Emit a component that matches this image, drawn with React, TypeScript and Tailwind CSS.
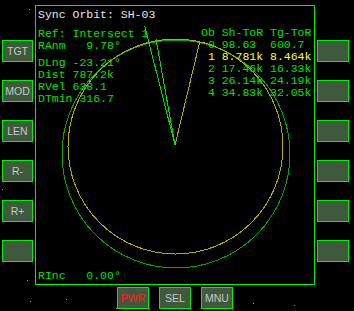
const leftButtons = ['TGT', 'MOD', 'LEN', 'R-', 'R+', ''];
const rightButtons = ['', '', '', '', '', ''];

const stars = [
  [29, 9], [2, 189], [27, 280], [66, 299], [30, 301], [253, 303], [294, 305], [116, 308],
];

const tableRows = [
  { text: ' 0 98.63  600.7', hl: false },
  { text: ' 1 8.781k 8.464k', hl: true },
  { text: ' 2 17.46k 16.33k', hl: false },
  { text: ' 3 26.14k 24.19k', hl: false },
  { text: ' 4 34.83k 32.05k', hl: false },
];

function MfdButton({ label, red, wide }: { label: string; red?: boolean; wide?: boolean }) {
  return (
    <div
      className={`${wide ? 'w-[32px]' : 'w-[31px]'} h-[22px] bg-[#3e593e] border border-[#00f000] flex items-center justify-center text-[10.5px] leading-none font-['Liberation_Sans',Arial,sans-serif] ${
        red ? 'text-[#ff1a1a]' : 'text-[#c8c8c8]'
      }`}
    >
      {label}
    </div>
  );
}

function OrbitPlot() {
  return (
    <svg
      className="absolute inset-0 w-[278px] h-[278px]"
      viewBox="36 6 278 278"
      fill="none"
      shapeRendering="crispEdges"
    >
      {/* target orbit / ship orbit */}
      <circle cx="176" cy="154" r="114" stroke="#00a800" strokeWidth="1" />
      <circle cx="175.5" cy="146.5" r="107.5" stroke="#b0b000" strokeWidth="1" />
      {/* intersect / periapsis lines */}
      <line x1="175" y1="145" x2="144.7" y2="26" stroke="#00e000" strokeWidth="1" />
      <line x1="175" y1="145" x2="156" y2="39" stroke="#00e000" strokeWidth="1" />
      <line x1="175" y1="145" x2="200" y2="41" stroke="#b0b000" strokeWidth="1" />
    </svg>
  );
}

export default function App() {
  return (
    <div className="relative w-[354px] h-[311px] bg-black overflow-hidden font-['Liberation_Mono',monospace]">
      {stars.map(([x, y], i) => (
        <span
          key={i}
          className="absolute w-[1px] h-[1px] bg-[#a0a0a0]"
          style={{ left: x, top: y }}
        />
      ))}

      <div className="flex pt-[5px]">
        {/* Left soft keys */}
        <div className="w-[35px] flex flex-col gap-[18px] pl-[2px] pt-[35px]">
          {leftButtons.map((b, i) => (
            <MfdButton key={i} label={b} />
          ))}
        </div>

        {/* Display */}
        <div className="relative w-[280px] h-[280px] border border-[#00f000] flex flex-col px-[2px] pt-[2.5px] pb-[2.5px] text-[11.5px] leading-[12px] text-[#00e400]">
          <OrbitPlot />
          <div className="relative whitespace-pre text-[#e8e8e8]">Sync Orbit: SH-03</div>

          <div className="relative flex mt-[6px]">
            <div className="w-[163px] shrink-0 pt-[1px] whitespace-pre">
              <div>Ref: Intersect 1</div>
              <div>RAnm   9.78°</div>
              <div className="mt-[5px]">DLng -23.21°</div>
              <div>Dist 787.2k</div>
              <div>RVel 638.1</div>
              <div>DTmin 316.7</div>
            </div>
            <div className="whitespace-pre">
              <div>Ob Sh-ToR Tg-ToR</div>
              {tableRows.map((r) => (
                <div key={r.text} className={r.hl ? 'text-[#ffff30]' : ''}>
                  {r.text}
                </div>
              ))}
            </div>
          </div>

          <div className="relative mt-auto whitespace-pre">RInc   0.00°</div>
        </div>

        {/* Right soft keys */}
        <div className="flex flex-col gap-[18px] pl-[2px] pt-[35px]">
          {rightButtons.map((b, i) => (
            <MfdButton key={i} label={b} wide />
          ))}
        </div>
      </div>

      {/* Bottom keys */}
      <div className="flex gap-[10px] pl-[117px] mt-[2px]">
        <MfdButton label="PWR" red wide />
        <MfdButton label="SEL" wide />
        <MfdButton label="MNU" wide />
      </div>
    </div>
  );
}
